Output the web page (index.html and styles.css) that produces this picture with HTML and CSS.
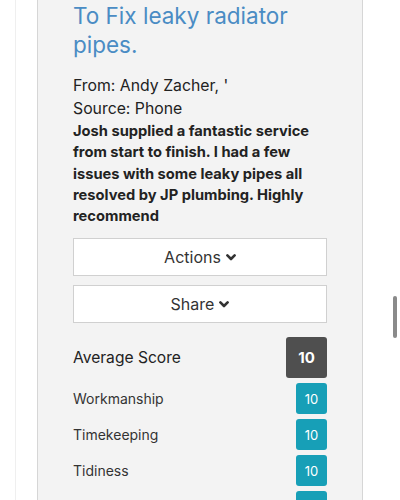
FILE: index.html
```html
<!DOCTYPE html>
<html>
<head>
<meta charset="utf-8">
<link rel="stylesheet" href="styles.css">
</head>
<body>
<div class="page">
  <div class="frame">
    <div class="card">
      <h2 class="title">To Fix leaky radiator pipes.</h2>
      <p class="meta first">From: Andy Zacher, '</p>
      <p class="meta">Source: Phone</p>
      <p class="review">Josh supplied a fantastic service from start to finish. I had a few issues with some leaky pipes all resolved by JP plumbing. Highly recommend</p>
      <div class="actions">
        <button class="btn">Actions<svg class="chev" viewBox="0 0 10 7" width="10" height="7"><polyline points="1.4,1.4 5,5 8.6,1.4" fill="none" stroke="#333" stroke-width="2.6" stroke-linecap="round" stroke-linejoin="round"/></svg></button>
        <button class="btn">Share<svg class="chev" viewBox="0 0 10 7" width="10" height="7"><polyline points="1.4,1.4 5,5 8.6,1.4" fill="none" stroke="#333" stroke-width="2.6" stroke-linecap="round" stroke-linejoin="round"/></svg></button>
      </div>
      <div class="scores">
        <div class="row avg"><span class="label">Average Score</span><span class="badge dark">10</span></div>
        <div class="row"><span class="label">Workmanship</span><span class="badge info">10</span></div>
        <div class="row"><span class="label">Timekeeping</span><span class="badge info">10</span></div>
        <div class="row"><span class="label">Tidiness</span><span class="badge info">10</span></div>
        <div class="row"><span class="label"></span><span class="badge info"></span></div>
      </div>
    </div>
  </div>
</div>
<div class="scrollbar"></div>
</body>
</html>
```
FILE: styles.css
```css
html, body {
  margin: 0;
  padding: 0;
  background: #fff;
  overflow: hidden;
  height: 500px;
}
body {
  font-family: Inter, "Liberation Sans", sans-serif;
  color: #222;
}
.page {
  padding-left: 15px;
}
.frame {
  width: 367px;
  border-left: 1px solid #efefef;
  border-right: 1px solid #ececec;
  padding-left: 21px;
  box-sizing: content-box;
}
.card {
  width: 254px;
  padding: 1px 35px 20px;
  background: #f3f3f3;
  border-left: 1px solid #d6d6d6;
  border-right: 1px solid #d6d6d6;
}
.title {
  margin: 0;
  font-size: 22.5px;
  line-height: 29px;
  font-weight: 400;
  color: #4a8cc4;
}
.meta {
  margin: 0;
  font-size: 15.8px;
  line-height: 23px;
  color: #222;
}
.meta.first {
  margin-top: 15px;
}
.review {
  margin: 1px 0 0;
  font-size: 14.7px;
  line-height: 21.3px;
  font-weight: 700;
  color: #222;
}
.actions {
  display: flex;
  flex-direction: column;
  gap: 9px;
  margin-top: 11px;
}
.btn {
  display: flex;
  align-items: center;
  justify-content: center;
  gap: 5px;
  height: 38px;
  width: 100%;
  background: #fff;
  border: 1px solid #d0d0d0;
  border-radius: 0;
  font-family: inherit;
  font-size: 16px;
  color: #333;
  padding: 0;
}
.chev {
  display: block;
  margin-top: 1px;
}
.scores {
  margin-top: 14px;
  display: flex;
  flex-direction: column;
  gap: 5px;
}
.row {
  display: flex;
  align-items: center;
  justify-content: space-between;
}
.label {
  font-size: 14px;
  color: #333;
}
.avg .label {
  font-size: 15.6px;
  color: #222;
}
.badge {
  display: flex;
  align-items: center;
  justify-content: center;
  color: #fff;
  border-radius: 3px;
}
.badge.dark {
  width: 41px;
  height: 41px;
  background: #4f4f4f;
  font-weight: 700;
  font-size: 15px;
}
.badge.info {
  width: 31px;
  height: 31px;
  background: #179fb7;
  font-size: 13px;
}
.scrollbar {
  position: fixed;
  left: 393px;
  top: 296px;
  width: 4px;
  height: 42px;
  border-radius: 2px;
  background: #8a8a8a;
}
```
